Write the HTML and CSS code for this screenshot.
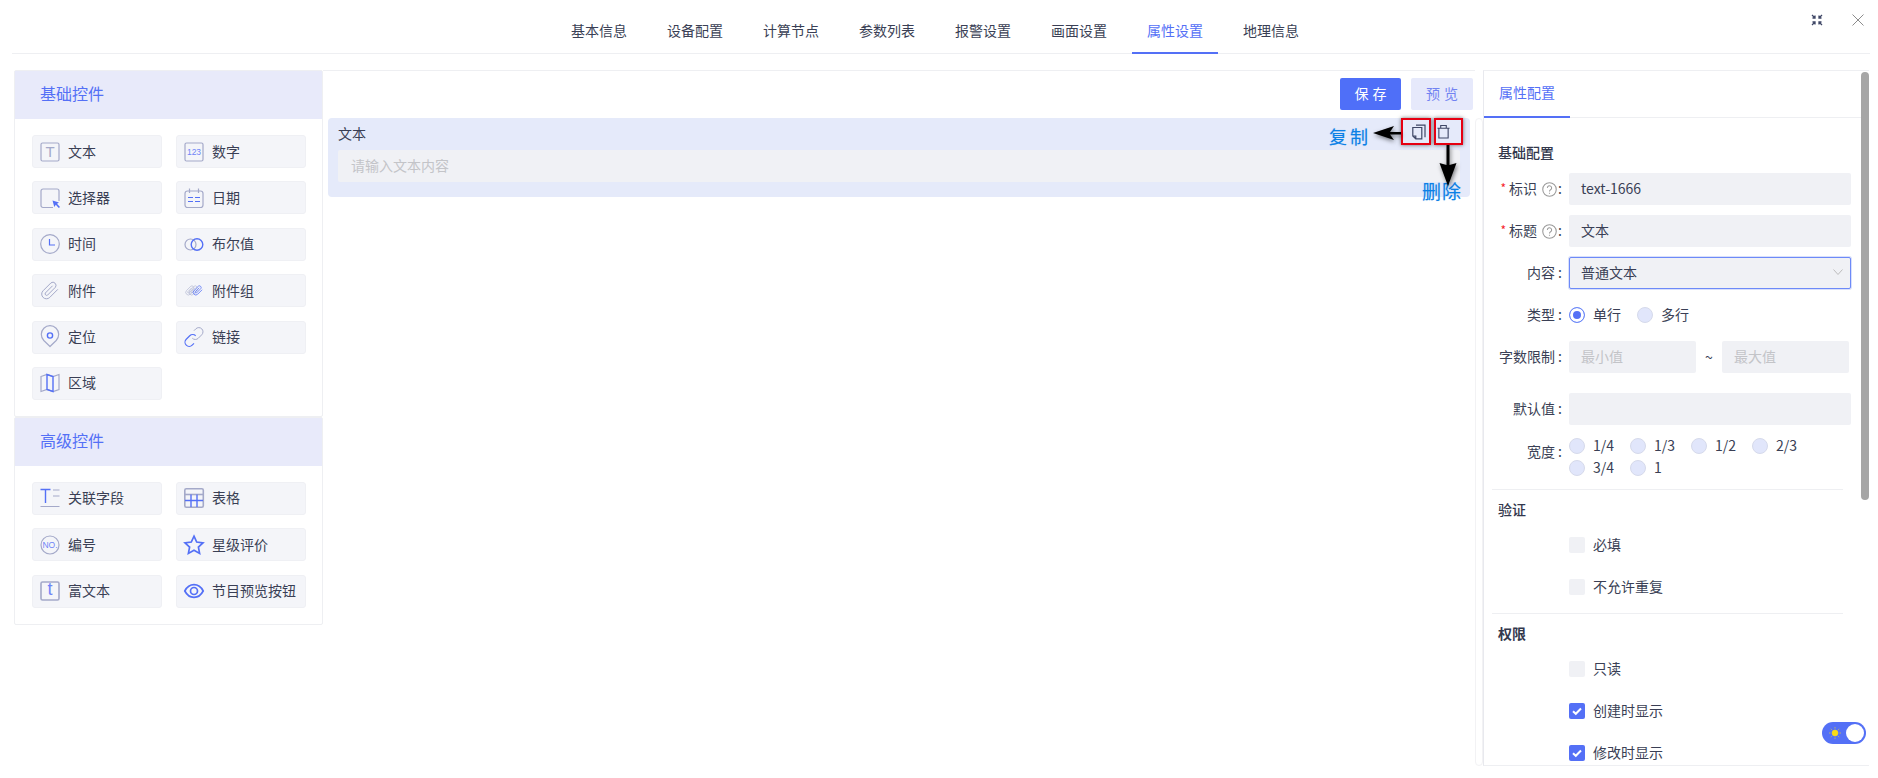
FILE: index.html
```html
<!DOCTYPE html>
<html lang="zh">
<head>
<meta charset="utf-8">
<title>属性设置</title>
<link rel="stylesheet" href="styles.css">
</head>
<body>
<header class="nav">
  <nav class="tabs">
    <a class="tab">基本信息</a><a class="tab">设备配置</a><a class="tab">计算节点</a><a class="tab">参数列表</a><a class="tab">报警设置</a><a class="tab">画面设置</a><a class="tab active">属性设置</a><a class="tab">地理信息</a>
  </nav>
  <div class="win-actions">
    <svg class="win-icon" viewBox="0 0 12 12"><path class="dark" d="M1 1l3 3M4 1.500V4H1.500M11 1L8 4M8 1.500V4h2.500M1 11l3-3M1.500 8H4v2.500M11 11L8 8M10.500 8H8v2.500"/></svg>
    <svg class="win-icon close" viewBox="0 0 12 12"><path d="M.5.500l11 11M11.500.500l-11 11"/></svg>
  </div>
</header>

<main class="workspace">
  <aside class="palette">
    <section class="group">
      <h2 class="group-title">基础控件</h2>
      <div class="group-grid">
        <div class="ctl"><svg class="ico" viewBox="0 0 20 20"><rect class="g" x="1" y="1" width="18" height="18" rx="1.500"/><text class="ig" x="10" y="15" font-size="15">T</text></svg>文本</div>
        <div class="ctl"><svg class="ico" viewBox="0 0 20 20"><rect class="g" x="1" y="1" width="18" height="18" rx="1.500"/><text class="ib" x="10" y="13" font-size="8.500">123</text></svg>数字</div>
        <div class="ctl"><svg class="ico" viewBox="0 0 20 20"><path class="g" d="M13 19.500H3a2 2 0 0 1-2-2V3a2 2 0 0 1 2-2h14a2 2 0 0 1 2 2v10"/><path class="bf" d="M12.500 12.500l6.500 2-2 1.200 3 3.300-1.200 1-3-3.300-1.500 2.200z"/></svg>选择器</div>
        <div class="ctl"><svg class="ico" viewBox="0 0 20 20"><rect class="g" x="1" y="3" width="18" height="16.500" rx="2.500"/><path class="g" d="M5.500 .5V5M14.500 .5V5"/><path class="b" d="M4 9.500h5M11 9.500h5M4 13.500h5M11 13.500h5"/></svg>日期</div>
        <div class="ctl"><svg class="ico" viewBox="0 0 20 20"><circle class="g" cx="10" cy="10" r="9.300"/><path class="b" d="M9.500 5v6H15"/></svg>时间</div>
        <div class="ctl"><svg class="ico" viewBox="0 0 20 20"><circle class="g" cx="6.500" cy="10.500" r="5.500"/><circle class="b2" cx="13" cy="10.500" r="5.800"/></svg>布尔值</div>
        <div class="ctl"><svg class="ico" viewBox="0 0 24 24"><path class="g" d="M21.400 10l-9.700 9.700a5.600 5.600 0 0 1-8-8l9.500-9.500a3.800 3.800 0 0 1 5.300 5.300l-9.500 9.500a1.900 1.900 0 0 1-2.600-2.600l8.700-8.700"/></svg>附件</div>
        <div class="ctl"><svg class="ico" viewBox="0 0 24 24"><g transform="translate(1 5) scale(.55)"><path class="g2" d="M21.400 10l-9.700 9.700a5.600 5.600 0 0 1-8-8l9.500-9.500a3.800 3.800 0 0 1 5.300 5.300l-9.500 9.500a1.900 1.900 0 0 1-2.600-2.600l8.700-8.700"/></g><g transform="translate(5 5) scale(.55)"><path class="g2" d="M21.400 10l-9.700 9.700a5.600 5.600 0 0 1-8-8l9.500-9.500a3.800 3.800 0 0 1 5.300 5.300l-9.500 9.500a1.900 1.900 0 0 1-2.600-2.600l8.700-8.700"/></g><g transform="translate(10 5) scale(.55)"><path class="b3" d="M21.400 10l-9.700 9.700a5.600 5.600 0 0 1-8-8l9.500-9.500a3.800 3.800 0 0 1 5.300 5.300l-9.500 9.500a1.900 1.900 0 0 1-2.600-2.600l8.700-8.700"/></g></svg>附件组</div>
        <div class="ctl"><svg class="ico" viewBox="0 0 20 20"><path class="g" d="M10 19.500L3.800 13.500A8.700 8.700 0 1 1 16.200 13.500z" stroke-linejoin="round"/><circle class="b2" cx="10" cy="8.500" r="2.600"/></svg>定位</div>
        <div class="ctl"><svg class="ico" viewBox="0 0 24 24"><path class="b2" d="M14 10.500a5 5 0 0 0-7.100 0l-4.200 4.200a5 5 0 0 0 7.100 7.100l2.200-2.200"/><path class="g" d="M10 13.500a5 5 0 0 0 7.100 0l4.200-4.200a5 5 0 0 0-7.100-7.100L12 4.400"/></svg>链接</div>
        <div class="ctl"><svg class="ico" viewBox="0 0 20 20"><path class="g" d="M1 3.500l6-2 6 2 6-2v15l-6 2-6-2-6 2z"/><path class="b2" d="M7 1.500v15l6 2V3.500z"/></svg>区域</div>
      </div>
    </section>
    <section class="group">
      <h2 class="group-title">高级控件</h2>
      <div class="group-grid">
        <div class="ctl"><svg class="ico" viewBox="0 0 20 20"><path class="b2" d="M.5 1.500h10M5.500 1.500V15"/><path class="g" d="M13 2h6.500M13 8h6.500M.5 18.500h19"/></svg>关联字段</div>
        <div class="ctl"><svg class="ico" viewBox="0 0 20 20"><rect class="g1" x=".8" y=".8" width="18.500" height="18.500" rx="1.500"/><path class="g1" d="M1 6.500h18"/><path class="b2" d="M1 12.500h18M7 6.500V19M13 6.500V19"/></svg>表格</div>
        <div class="ctl"><svg class="ico" viewBox="0 0 20 20"><circle class="g" cx="10" cy="10" r="9"/><text class="ib" x="10" y="13" font-size="8.500">NO.</text></svg>编号</div>
        <div class="ctl"><svg class="ico" viewBox="0 0 20 20"><path class="b3" d="M10 1.200l2.700 5.800 6.300.8-4.600 4.300 1.200 6.300-5.600-3.100-5.600 3.100 1.200-6.300L1 7.800l6.300-.8z"/></svg>星级评价</div>
        <div class="ctl"><svg class="ico" viewBox="0 0 20 20"><rect class="g1" x="1" y="1" width="18" height="18" rx="1.500"/><text class="ib" x="10" y="14" font-size="18">t</text></svg>富文本</div>
        <div class="ctl"><svg class="ico" viewBox="0 0 20 20"><path class="b3" d="M.8 10C3 5.800 6.200 3.700 10 3.700S17 5.800 19.200 10C17 14.200 13.800 16.300 10 16.300S3 14.200.8 10z"/><circle class="b3" cx="10" cy="10" r="3.500"/></svg>节目预览按钮</div>
      </div>
    </section>
  </aside>

  <section class="canvas">
    <div class="toolbar">
      <button class="btn primary">保存</button>
      <button class="btn soft">预览</button>
    </div>
    <div class="field-card">
      <div class="field-label">文本</div>
      <div class="field-input">请输入文本内容</div>
      <div class="note-box copy"><svg class="box-ico" viewBox="0 0 16 16"><path d="M5 1.200h9v12M1.800 3.500h9v11.300H4.800L1.800 12zM1.800 12h3v2.800"/></svg></div>
      <div class="note-box trash"><svg class="box-ico small" viewBox="0 0 14 16"><path d="M2 5v10h10V5M.5 4.500h13M4 4.500V1.500h6v3"/></svg></div>
      <span class="note-text note-copy">复制</span>
      <span class="note-text note-del">删除</span>
      <svg class="note-arrow arrow-left" viewBox="0 0 30 16"><path d="M1 8l21-7-4 6h11v2.500H18l4 5.500z"/></svg>
      <svg class="note-arrow arrow-down" viewBox="0 0 20 42"><path d="M8.500 0h3v20l7-2-8.500 23L1.500 18l7 2z"/></svg>
    </div>
  </section>

  <div class="rail"></div>

  <aside class="props">
    <div class="props-body">
      <div class="props-tabs"><span class="props-tab">属性配置</span></div>

      <h3 class="sec first">基础配置</h3>
      <div class="row">
        <label class="lbl"><i class="req">*</i>标识<svg class="help" viewBox="0 0 14 14"><circle cx="7" cy="7" r="6.300"/><path d="M5 5.500a2 2 0 1 1 3 1.800c-.7.400-1 .8-1 1.500M7 10v1"/></svg><b class="colon tight">:</b></label>
        <div class="inp">text-1666</div>
      </div>
      <div class="row">
        <label class="lbl"><i class="req">*</i>标题<svg class="help" viewBox="0 0 14 14"><circle cx="7" cy="7" r="6.300"/><path d="M5 5.500a2 2 0 1 1 3 1.800c-.7.400-1 .8-1 1.500M7 10v1"/></svg><b class="colon tight">:</b></label>
        <div class="inp">文本</div>
      </div>
      <div class="row">
        <label class="lbl">内容<b class="colon">:</b></label>
        <div class="inp focus">普通文本<svg class="chev" viewBox="0 0 10 6"><path d="M.5.500L5 5.500 9.500.500"/></svg></div>
      </div>
      <div class="row">
        <label class="lbl">类型<b class="colon">:</b></label>
        <div class="opts">
          <span class="opt wide"><i class="radio on"></i>单行</span>
          <span class="opt"><i class="radio"></i>多行</span>
        </div>
      </div>
      <div class="row">
        <label class="lbl">字数限制<b class="colon">:</b></label>
        <div class="range">
          <div class="inp half ph">最小值</div>
          <span class="tilde">~</span>
          <div class="inp half ph">最大值</div>
        </div>
      </div>
      <div class="row spaced">
        <label class="lbl">默认值<b class="colon">:</b></label>
        <div class="inp"></div>
      </div>
      <div class="row tall">
        <label class="lbl lbl-tall">宽度<b class="colon">:</b></label>
        <div class="widths">
          <span class="opt w"><i class="radio"></i>1/4</span>
          <span class="opt w"><i class="radio"></i>1/3</span>
          <span class="opt w"><i class="radio"></i>1/2</span>
          <span class="opt w"><i class="radio"></i>2/3</span>
          <span class="opt w"><i class="radio"></i>3/4</span>
          <span class="opt w"><i class="radio"></i>1</span>
        </div>
      </div>

      <hr class="div">
      <h3 class="sec">验证</h3>
      <div class="chk-list">
        <div class="chk"><i class="box"></i>必填</div>
        <div class="chk"><i class="box"></i>不允许重复</div>
      </div>

      <hr class="div">
      <h3 class="sec strong">权限</h3>
      <div class="chk-list">
        <div class="chk"><i class="box"></i>只读</div>
        <div class="chk"><i class="box on"><svg viewBox="0 0 12 12"><path d="M2 6.200l2.800 2.600L10 3.500"/></svg></i>创建时显示</div>
        <div class="chk"><i class="box on"><svg viewBox="0 0 12 12"><path d="M2 6.200l2.800 2.600L10 3.500"/></svg></i>修改时显示</div>
      </div>
    </div>
    <div class="scrollbar"><div class="thumb"></div></div>
  </aside>
</main>

<div class="theme-toggle">
  <svg class="sun" viewBox="0 0 12 12"><circle cx="6" cy="6" r="3"/><path d="M6 0v1.500M6 10.500V12M0 6h1.500M10.500 6H12M1.800 1.800l1 1M9.200 9.200l1 1M1.800 10.200l1-1M9.200 2.800l1-1"/></svg>
  <span class="knob"></span>
</div>
</body>
</html>
```

FILE: styles.css
```css
* { box-sizing: border-box; }
html, body { margin: 0; height: 100%; }
body {
  width: 1878px;
  height: 778px;
  overflow: hidden;
  position: relative;
  background: #fff;
  color: #3a3f55;
  font-family: "Noto Sans CJK SC", "Noto Sans", sans-serif;
  font-size: 14px;
  line-height: 22px;
}
h2, h3 { margin: 0; font-weight: 400; }
i, b { font-style: normal; font-weight: 400; }

/* top navigation */
.nav {
  height: 54px;
  margin: 0 8px 0 12px;
  border-bottom: 1px solid #eeeff2;
  display: flex;
}
.tabs { display: flex; margin-left: 544px; }
.tab {
  width: 86px;
  margin-right: 10px;
  height: 54px;
  padding-top: 19px;
  text-align: center;
  color: #3a3f55;
}
.tab.active { color: #5470f6; border-bottom: 2px solid #5470f6; }
.win-actions { margin-left: auto; display: flex; gap: 29px; padding: 14px 6px 0 0; }
.win-icon { width: 12px; height: 12px; fill: none; }
.dark { stroke: #3f4766; stroke-width: 1.300; }
.close path { stroke: #8c8c8c; stroke-width: 1; }

/* layout */
.workspace { display: flex; margin: 16px 9px 0 14px; height: 696px; }

/* palette */
.palette { width: 309px; flex: none; }
.group { border: 1px solid #eeeff2; border-radius: 2px; }
.group-title {
  height: 48px;
  line-height: 44px;
  padding-left: 25px;
  background: #e8eafa;
  color: #5470f6;
  font-size: 16px;
}
.group-grid {
  display: grid;
  grid-template-columns: 130px 130px;
  column-gap: 14px;
  row-gap: 13.400px;
  grid-auto-rows: 33px;
  padding: 16px 17px;
}
.ctl {
  display: flex;
  align-items: center;
  gap: 8px;
  padding: 0 0 2px 7px;
  background: #f4f5f9;
  border: 1px solid #eff0f4;
  border-radius: 3px;
  white-space: nowrap;
  color: #3a3f55;
}
.ico { width: 20px; height: 20px; margin-top: 2px; flex: none; overflow: visible; }
.g, .g1, .g2, .b, .b2, .b3 { fill: none; stroke-width: 1.200; }
.g, .g1, .g2 { stroke: #a4a9c9; }
.b, .b2, .b3 { stroke: #5470f6; }
.g1 { stroke-width: 1.600; }
.b2 { stroke-width: 1.400; }
.b3 { stroke-width: 1.700; }
.bf { fill: #5470f6; }
.ig, .ib { text-anchor: middle; font-family: "Liberation Sans", sans-serif; }
.ig { fill: #a4a9c9; }
.ib { fill: #6f84f7; }

/* canvas */
.canvas { flex: 1; min-width: 0; border-top: 1px solid #eeeff2; }
.toolbar { display: flex; justify-content: flex-end; gap: 10px; padding: 7px 2px 8px 0; }
.btn {
  width: 61px;
  height: 32px;
  border: 0;
  border-radius: 2px;
  font: inherit;
  letter-spacing: 4px;
  padding: 0 0 2px 4px;
}
.btn.primary { background: #4f6ff8; color: #fff; }
.btn.soft { background: #e6e9fb; color: #7283f2; width: 62px; }
.field-card {
  position: relative;
  height: 79px;
  margin: 0 5px 0 5px;
  padding: 5px 10px 0;
  background: #e5eafa;
  border-radius: 4px;
}
.field-label { height: 27px; line-height: 20px; }
.field-input {
  height: 32px;
  line-height: 30px;
  padding-left: 13px;
  background: #f0f1f5;
  border-radius: 2px;
  color: #c3c4c8;
}

/* annotations pasted over the field */
.note-box {
  position: absolute;
  top: 0;
  width: 30px;
  height: 27px;
  border: 2px solid #e60012;
  box-shadow: 0 0 4px rgba(0, 0, 0, .55);
  display: flex;
  align-items: center;
}
.note-box.copy { left: 1073px; padding-left: 8px; }
.note-box.trash { left: 1106px; width: 29px; padding-left: 1px; }
.box-ico { width: 16px; height: 16px; flex: none; fill: none; stroke: #3f4766; stroke-width: 1.200; }
.box-ico.small { width: 13px; height: 15px; }
.note-text {
  position: absolute;
  color: #0b80e6;
  font-size: 18px;
  line-height: 20px;
  letter-spacing: 3px;
  white-space: nowrap;
  text-shadow: 0 0 1px rgba(11, 128, 230, .4);
}
.note-copy { left: 1001px; top: 8px; }
.note-del { left: 1094px; top: 63px; font-size: 19px; letter-spacing: 1px; }
.note-arrow { position: absolute; overflow: visible; fill: #000; filter: drop-shadow(1px 2px 2px rgba(0, 0, 0, .5)); }
.arrow-left { left: 1044px; top: 7px; width: 30px; height: 16px; }
.arrow-down { left: 1110px; top: 27px; width: 20px; height: 42px; }

/* the thin rail between canvas and properties */
.rail {
  width: 8px;
  flex: none;
  margin-top: 48px;
  border: 1px solid #f2f2f4;
  border-radius: 4px;
}

/* properties panel */
.props {
  width: 386px;
  flex: none;
  display: flex;
  border-top: 1px solid #eeeff2;
  border-bottom: 1px solid #eeeff2;
  border-left: 1px solid #e8e9ee;
  overflow: hidden;
}
.props-body { flex: 1; min-width: 0; padding-right: 10px; }
.props-tabs { height: 47px; margin-right: -10px; border-bottom: 1px solid #eeeff2; }
.props-tab {
  display: block;
  width: 86px;
  height: 47px;
  line-height: 43px;
  text-align: center;
  color: #5470f6;
  border-bottom: 2px solid #5470f6;
}
.sec { margin: 8px 0 9px 14px; font-size: 14px; line-height: 22px; font-weight: 500; color: #33384d; }
.sec.first { margin: 23px 0 10px 14px; }
.row { display: flex; gap: 7px; height: 32px; margin-bottom: 10px; }
.row.spaced { margin-top: 20px; }
.row.tall { height: 44px; }
.lbl { width: 78px; flex: none; display: flex; align-items: center; justify-content: flex-end; padding-bottom: 2px; white-space: nowrap; color: #3a3f55; }
.lbl-tall { align-self: flex-start; height: 34px; }
.colon { margin-left: 3px; }
.colon.tight { margin-left: 1px; }
.req { color: #f5222d; margin-right: 3px; font-size: 12px; }
.help { width: 15px; height: 15px; margin: 2px 0 0 5px; fill: none; stroke: #9a9a9a; stroke-width: 1; }
.inp {
  position: relative;
  width: 282px;
  height: 32px;
  line-height: 30px;
  padding-left: 12px;
  background: #f0f1f5;
  border-radius: 2px;
  color: #3a3f55;
}
.inp.focus { border: 1px solid #6d8af8; box-shadow: 0 0 0 1px #d9e0fb; line-height: 28px; padding-left: 11px; }
.chev { position: absolute; right: 7px; top: 11px; width: 10px; height: 6px; fill: none; stroke: #bcbcbc; stroke-width: 1; }
.opts { display: flex; align-items: center; }
.opt { display: inline-flex; align-items: center; padding-bottom: 2px; }
.opt.wide { margin-right: 16px; }
.radio {
  width: 16px;
  height: 16px;
  margin: 2px 8px 0 0;
  flex: none;
  border-radius: 50%;
  background: #e1e6fb;
  border: 1px solid #d6daeb;
}
.radio.on { background: #5470f6; border: 1px solid #6d8af8; box-shadow: inset 0 0 0 3px #fff; }
.range { display: flex; align-items: center; }
.inp.half { width: 127px; }
.inp.ph { color: #c3c4c8; }
.tilde { width: 26px; text-align: center; }
.widths { display: flex; flex-wrap: wrap; width: 282px; align-content: flex-start; }
.opt.w { height: 22px; margin-right: 16px; }
.div { margin: 0 8px 0 8px; border: 0; border-top: 1px solid #eeeff2; }
.sec.strong { font-weight: 700; }
.chk-list { display: flex; flex-direction: column; gap: 10px; padding-left: 85px; }
.chk { height: 32px; display: flex; align-items: center; padding-bottom: 2px; white-space: nowrap; }
.chk-list + .div { margin-top: 10px; }
.box {
  width: 16px;
  height: 16px;
  margin: 2px 8px 0 0;
  flex: none;
  background: #f0f1f5;
  border-radius: 2px;
  display: flex;
}
.box.on { background: #5470f6; }
.box svg { width: 16px; height: 16px; padding: 2px; fill: none; stroke: #fff; stroke-width: 2; }
.scrollbar { width: 8px; flex: none; }
.thumb { height: 428px; margin-top: 1px; background: #a6a6a6; border-radius: 4px; }

/* floating theme switch */
.theme-toggle {
  position: absolute;
  left: 1822px;
  top: 722px;
  width: 44px;
  height: 22px;
  border-radius: 11px;
  background: #5470f6;
}
.sun { position: absolute; left: 7px; top: 5px; width: 12px; height: 12px; fill: #fadb14; stroke: #fadb14; stroke-width: .6; }
.knob { position: absolute; right: 2px; top: 2px; width: 18px; height: 18px; border-radius: 50%; background: #fff; }
```
